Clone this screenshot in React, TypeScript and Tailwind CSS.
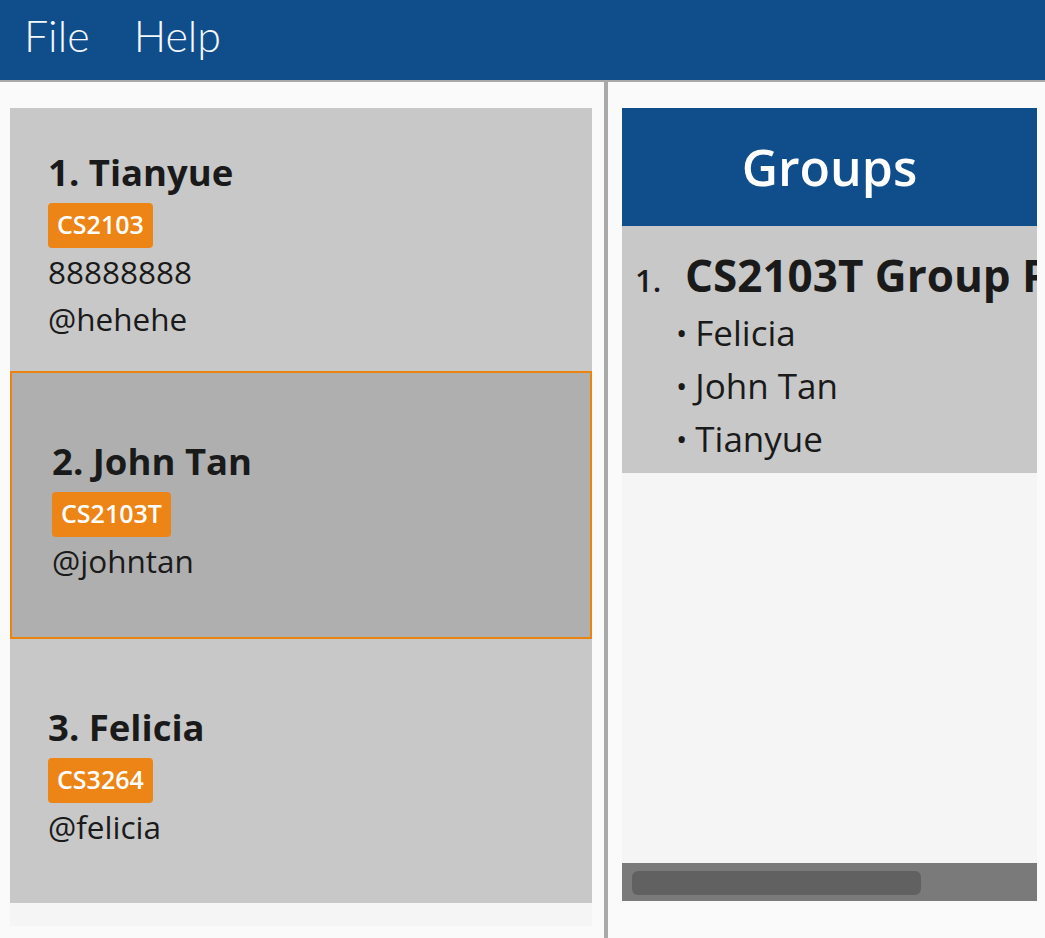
import React from 'react';

type Person = {
  index: number;
  name: string;
  tag: string;
  lines: string[];
  selected?: boolean;
  height: string;
};

const people: Person[] = [
  { index: 1, name: 'Tianyue', tag: 'CS2103', lines: ['88888888', '@hehehe'], height: 'h-[263px]' },
  { index: 2, name: 'John Tan', tag: 'CS2103T', lines: ['@johntan'], selected: true, height: 'h-[268px]' },
  { index: 3, name: 'Felicia', tag: 'CS3264', lines: ['@felicia'], height: 'h-[264px]' },
];

const font = { fontFamily: '"Open Sans", "Noto Sans", sans-serif' };

const PersonCard = ({ p }: { p: Person }) => (
  <div
    className={`${p.height} flex flex-col justify-center pt-[11px] ${
      p.selected ? 'bg-[#afafaf] border-[2px] border-[#ea840f] pl-[40px]' : 'bg-[#c8c8c8] pl-[38px]'
    }`}
  >
    <div className="text-[36.5px] leading-[46px] font-bold text-[#1a1a1a]">
      {p.index}. {p.name}
    </div>
    <div className="mt-[8px] flex">
      <span className="h-[45px] px-[9px] flex items-center rounded-[4px] bg-[#ed8416] text-white text-[25px] font-semibold">
        {p.tag}
      </span>
    </div>
    {p.lines.map((l) => (
      <div key={l} className="text-[31.5px] leading-[47px] text-[#1a1a1a]">
        {l}
      </div>
    ))}
  </div>
);

export default function App() {
  return (
    <div className="w-[1045px] h-[938px] bg-[#fafafa] overflow-hidden flex flex-col" style={font}>
      {/* menu bar */}
      <div
        className="h-[82px] shrink-0 bg-[#104e8b] border-b-[2px] border-[#a9a9a9] flex items-center pb-[8px] pl-[24px] gap-[44px] text-[#f4f8fc] font-light text-[43px]"
        style={{ fontFamily: '"Lato", "Open Sans", sans-serif' }}
      >
        <span>File</span>
        <span>Help</span>
      </div>

      <div className="flex flex-1 min-h-0">
        {/* person list */}
        <div className="pl-[10px] pt-[26px] w-[592px] shrink-0">
          <div className="bg-[#f5f5f5] h-[818px]">
            {people.map((p) => (
              <PersonCard key={p.index} p={p} />
            ))}
          </div>
        </div>

        <div className="w-[4px] ml-[12px] bg-[#a9a9a9] shrink-0" />

        {/* groups panel */}
        <div className="ml-[14px] pt-[26px] w-[415px] shrink-0 flex flex-col">
          <div className="h-[118px] bg-[#104e8b] flex items-center justify-center text-white text-[50px] font-semibold">
            Groups
          </div>
          <div className="h-[637px] bg-[#f5f5f5] overflow-hidden">
            <div className="h-[247px] bg-[#c8c8c8] pl-[13px] pt-[16px] w-[415px] overflow-hidden">
              <div className="flex items-baseline whitespace-nowrap text-[#1a1a1a]">
                <span className="text-[31px] font-semibold w-[50px] shrink-0">1.</span>
                <span className="text-[44px] font-bold">CS2103T Group Project</span>
              </div>
              <ul className="pl-[41px] -mt-[2px]">
                {['Felicia', 'John Tan', 'Tianyue'].map((n) => (
                  <li key={n} className="text-[35px] leading-[53px] text-[#1a1a1a] flex items-center">
                    <span className="text-[30px] mr-[8px]">•</span>
                    {n}
                  </li>
                ))}
              </ul>
            </div>
          </div>
          <div className="h-[38px] bg-[#7a7a7a] px-[10px] pt-[8px]">
            <div className="w-[289px] h-[24px] rounded-[6px] bg-[#616161]" />
          </div>
        </div>
      </div>
    </div>
  );
}
